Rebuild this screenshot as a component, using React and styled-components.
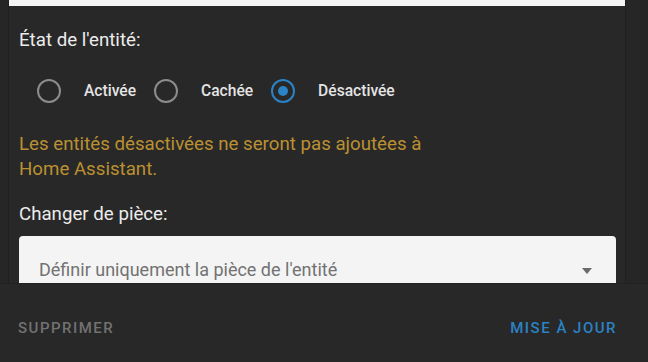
import React, { useState } from 'react';
import styled, { createGlobalStyle } from 'styled-components';

const GlobalStyle = createGlobalStyle`
  html, body {
    margin: 0;
    padding: 0;
    background: #262626;
    font-family: Roboto, "Noto Sans", sans-serif;
    -webkit-font-smoothing: antialiased;
  }
`;

const OPTIONS = ['Activée', 'Cachée', 'Désactivée'];

function App() {
  const [state, setState] = useState('Désactivée');

  return (
    <>
      <GlobalStyle />
      <Page>
        <ScrollArea>
          <Gutter />
          <Content>
            <TopField />
            <Inner>
              <SectionTitle top={22}>État de l'entité:</SectionTitle>
              <RadioRow>
                {OPTIONS.map((opt) => (
                  <RadioItem key={opt} onClick={() => setState(opt)}>
                    <Ring checked={state === opt} />
                    <RadioLabel>{opt}</RadioLabel>
                  </RadioItem>
                ))}
              </RadioRow>
              <Warning>
                Les entités désactivées ne seront pas ajoutées à
                <br />
                Home Assistant.
              </Warning>
              <SectionTitle top={20}>Changer de pièce:</SectionTitle>
              <Select>
                <Placeholder>Définir uniquement la pièce de l'entité</Placeholder>
                <Arrow />
              </Select>
            </Inner>
          </Content>
          <Gutter />
        </ScrollArea>
        <Footer>
          <TextButton color="#727272">Supprimer</TextButton>
          <TextButton color="#2b82c5">Mise à jour</TextButton>
        </Footer>
      </Page>
    </>
  );
}

export default App;

const Page = styled.div`
  width: 648px;
  height: 362px;
  display: flex;
  flex-direction: column;
  overflow: hidden;
`;

const ScrollArea = styled.div`
  height: 284px;
  flex-shrink: 0;
  display: flex;
  overflow: hidden;
  border-bottom: 1px solid #222222;
  box-sizing: border-box;
`;

const Gutter = styled.div`
  flex: 1;
  background: #262626;
  &:first-child {
    flex: 0 0 8px;
  }
`;

const Content = styled.div`
  width: 618px;
  background: #282828;
  border-left: 1px solid #202020;
  border-right: 1px solid #202020;
  box-sizing: border-box;
  display: flex;
  flex-direction: column;
`;

const TopField = styled.div`
  height: 6px;
  background: #f4f4f4;
  flex-shrink: 0;
`;

const Inner = styled.div`
  padding: 0 9px 0 10px;
  display: flex;
  flex-direction: column;
`;

const SectionTitle = styled.div`
  font-size: 18.7px;
  line-height: 24px;
  color: #ececec;
  margin-top: ${(p) => p.top}px;
`;

const RadioRow = styled.div`
  display: flex;
  align-items: center;
  padding-left: 18px;
  margin-top: 27px;
  height: 24px;
`;

const RadioItem = styled.div`
  display: flex;
  align-items: center;
  cursor: pointer;
  margin-right: 18px;
`;

const Ring = styled.span`
  width: 24px;
  height: 24px;
  box-sizing: border-box;
  border-radius: 50%;
  border: 2px solid ${(p) => (p.checked ? '#2b82c5' : '#8c8c8c')};
  display: flex;
  align-items: center;
  justify-content: center;
  &::after {
    content: '';
    width: 10px;
    height: 10px;
    border-radius: 50%;
    background: #2b82c5;
    display: ${(p) => (p.checked ? 'block' : 'none')};
  }
`;

const RadioLabel = styled.span`
  margin-left: 23px;
  font-size: 15.6px;
  font-weight: 500;
  color: #e4e4e4;
`;

const Warning = styled.div`
  margin-top: 29px;
  font-size: 18.7px;
  line-height: 25px;
  color: #bb9032;
`;

const Select = styled.div`
  margin-top: 10px;
  height: 56px;
  background: #f4f4f4;
  border-radius: 4px 4px 0 0;
  display: flex;
  align-items: flex-start;
  justify-content: space-between;
  padding: 24px 24px 0 20px;
  box-sizing: border-box;
  flex-shrink: 0;
`;

const Placeholder = styled.span`
  font-size: 18px;
  line-height: 20px;
  color: #727272;
`;

const Arrow = styled.span`
  width: 0;
  height: 0;
  border-left: 5.5px solid transparent;
  border-right: 5.5px solid transparent;
  border-top: 6px solid #6a6a6a;
  margin-top: 8px;
`;

const Footer = styled.div`
  flex: 1;
  background: #282828;
  display: flex;
  align-items: center;
  justify-content: space-between;
  padding: 9px 31px 0 18px;
`;

const TextButton = styled.button`
  background: none;
  border: none;
  padding: 0;
  font-family: Roboto, sans-serif;
  font-size: 15px;
  font-weight: 500;
  letter-spacing: 1.5px;
  text-transform: uppercase;
  color: ${(p) => p.color};
  cursor: pointer;
`;
